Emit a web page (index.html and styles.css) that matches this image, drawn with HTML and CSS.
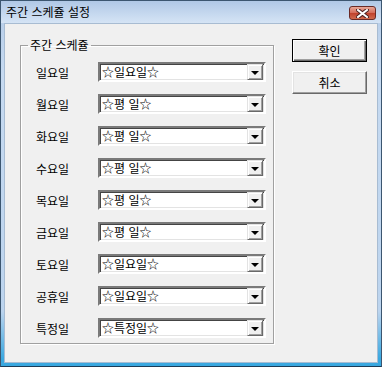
FILE: index.html
```html
<!DOCTYPE html>
<html lang="ko">
  <head>
    <meta charset="utf-8" />
    <title>주간 스케쥴 설정</title>
    <meta name="viewport" content="width=device-width, initial-scale=1" />
    <link rel="stylesheet" href="styles.css">
  </head>
  <body>
    <div class="window">
      <div class="titlebar">
        <span class="title">주간 스케쥴 설정</span>
        <button class="close" aria-label="닫기">
          <svg width="13" height="9" viewBox="0 0 13 9">
            <path d="M2 1 L11 8 M11 1 L2 8" stroke="#4a2020" stroke-width="4" stroke-linecap="square" />
            <path d="M2 1 L11 8 M11 1 L2 8" stroke="#fff" stroke-width="2" stroke-linecap="square" />
          </svg>
        </button>
      </div>
      <div class="client">
        <fieldset class="group">
          <legend>주간 스케쥴</legend>
          <div class="row"><span class="label">일요일</span><div class="combo"><span class="value">☆일요일☆</span><span class="drop"><i></i></span></div></div>
          <div class="row"><span class="label">월요일</span><div class="combo"><span class="value">☆평 일☆</span><span class="drop"><i></i></span></div></div>
          <div class="row"><span class="label">화요일</span><div class="combo"><span class="value">☆평 일☆</span><span class="drop"><i></i></span></div></div>
          <div class="row"><span class="label">수요일</span><div class="combo"><span class="value">☆평 일☆</span><span class="drop"><i></i></span></div></div>
          <div class="row"><span class="label">목요일</span><div class="combo"><span class="value">☆평 일☆</span><span class="drop"><i></i></span></div></div>
          <div class="row"><span class="label">금요일</span><div class="combo"><span class="value">☆평 일☆</span><span class="drop"><i></i></span></div></div>
          <div class="row"><span class="label">토요일</span><div class="combo"><span class="value">☆일요일☆</span><span class="drop"><i></i></span></div></div>
          <div class="row"><span class="label">공휴일</span><div class="combo"><span class="value">☆일요일☆</span><span class="drop"><i></i></span></div></div>
          <div class="row"><span class="label">특정일</span><div class="combo"><span class="value">☆특정일☆</span><span class="drop"><i></i></span></div></div>
        </fieldset>
        <div class="buttons">
          <button class="btn default">확인</button>
          <button class="btn">취소</button>
        </div>
      </div>
    </div>
  </body>
</html>
```

FILE: styles.css
```css
html,
body {
  margin: 0;
  padding: 0;
}
body {
  width: 382px;
  height: 367px;
  font-family: 'Noto Sans CJK KR', 'Noto Sans', sans-serif;
  font-size: 12px;
  color: #000;
}
.window {
  box-sizing: border-box;
  width: 382px;
  height: 367px;
  border: 1px solid #3c5670;
  border-bottom-color: #1c3c58;
  background: linear-gradient(#b4cbe7, #c6daf1 20%, #bcd4ee 85%, #3aa8e0 98%);
  display: flex;
  flex-direction: column;
}
.titlebar {
  height: 22px;
  display: flex;
  align-items: center;
  justify-content: space-between;
  padding: 0 5px 0 5px;
  background: linear-gradient(#b0c8e6, #d5e4f5);
}
.title {
  line-height: 14px;
  color: #000;
}
.close {
  width: 27px;
  height: 14px;
  padding: 0;
  margin-top: 2px;
  border: 1px solid #6a2a26;
  border-radius: 3px;
  background: linear-gradient(#e8a898, #d46a58 50%, #c0402c 51%, #d06a4e);
  display: flex;
  align-items: center;
  justify-content: center;
}
.client {
  flex: 1;
  margin: 0 3px 3px 3px;
  background: #f0f0f0;
  border: 1px solid #a8bcd2;
  display: flex;
  align-items: flex-start;
  padding: 14px 0 0 15px;
}
.group {
  box-sizing: border-box;
  width: 254px;
  height: 306px;
  margin: 0;
  padding: 10px 6px 0 15px;
  border: 1px solid #a0a0a0;
  box-shadow: inset 1px 1px 0 #fff, 1px 1px 0 #fff;
  display: flex;
  flex-direction: column;
  gap: 12px;
}
.group legend {
  padding: 0 2px;
  margin-left: -8px;
  line-height: 14px;
}
.row {
  display: flex;
  align-items: center;
  height: 20px;
}
.label {
  width: 62px;
  padding-top: 1px;
}
.combo {
  box-sizing: border-box;
  width: 168px;
  height: 20px;
  display: flex;
  align-items: center;
  background: #fff;
  border-style: solid;
  border-width: 2px;
  border-color: #7a7a7a #fff #fff #7a7a7a;
  box-shadow: inset 1px 1px 0 #444, inset -1px -1px 0 #e3e3e3;
  padding: 0 1px 0 2px;
}
.value {
  flex: 1;
  line-height: 14px;
}
.drop {
  box-sizing: border-box;
  width: 16px;
  height: 16px;
  background: #f0f0f0;
  border-style: solid;
  border-width: 1px;
  border-color: #e3e3e3 #696969 #696969 #e3e3e3;
  box-shadow: inset 1px 1px 0 #fff, inset -1px -1px 0 #a0a0a0;
  display: flex;
  align-items: center;
  justify-content: center;
}
.drop i {
  width: 0;
  height: 0;
  border-left: 4px solid transparent;
  border-right: 4px solid transparent;
  border-top: 4px solid #000;
  margin-top: 1px;
}
.buttons {
  display: flex;
  flex-direction: column;
  gap: 9px;
  margin-left: 18px;
  margin-top: 1px;
}
.btn {
  box-sizing: border-box;
  width: 75px;
  height: 23px;
  padding: 0;
  font-family: inherit;
  font-size: 12px;
  background: #f0f0f0;
  border-style: solid;
  border-width: 1px;
  border-color: #fff #696969 #696969 #fff;
  box-shadow: inset -1px -1px 0 #a0a0a0, inset 1px 1px 0 #e3e3e3;
}
.btn.default {
  border: 1px solid #000;
  box-shadow: inset 1px 1px 0 #fff, inset -1px -1px 0 #696969, inset -2px -2px 0 #a0a0a0;
}
```
